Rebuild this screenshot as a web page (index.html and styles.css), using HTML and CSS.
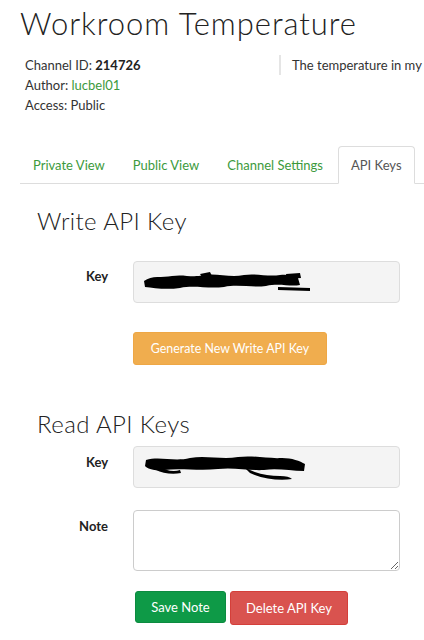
FILE: index.html
```html
<!DOCTYPE html>
<html>
<head>
<meta charset="utf-8">
<link rel="stylesheet" href="styles.css">
</head>
<body>
<div class="page">
  <h1 class="title">Workroom Temperature</h1>
  <div class="meta">
    <div class="meta-left">
      <div>Channel ID: <strong>214726</strong></div>
      <div>Author: <a class="link">lucbel01</a></div>
      <div>Access: Public</div>
    </div>
    <div class="meta-right">The temperature in my</div>
  </div>
  <ul class="tabs">
    <li class="tab">Private View</li>
    <li class="tab">Public View</li>
    <li class="tab">Channel Settings</li>
    <li class="tab active">API Keys</li>
  </ul>
  <div class="panel">
    <h2 class="section">Write API Key</h2>
    <div class="row row-write">
      <div class="label">Key</div>
      <div class="field key-field">
        <svg class="scribble" width="170" height="26" viewBox="0 0 170 26">
          <path d="M4 12 C12 6 22 9 32 7 C44 5 52 9 64 6 C78 4 90 9 104 6 C116 4 128 8 140 6 C148 5 154 7 158 9 L160 16 C150 18 140 14 126 17 C112 19 98 15 84 18 C68 20 54 16 40 19 C26 21 14 19 5 18 Z" fill="#000"/>
          <path d="M138 18 L170 19 L170 22 L138 21 Z" fill="#000"/>
          <path d="M146 5 L160 4 L161 9 L147 10 Z" fill="#000"/>
          <path d="M60 5 L70 3 L72 7 L62 8 Z" fill="#000"/>
        </svg>
      </div>
    </div>
    <div class="row">
      <div class="label"></div>
      <button class="btn btn-warning">Generate New Write API Key</button>
    </div>
    <h2 class="section section-read">Read API Keys</h2>
    <div class="row row-key2">
      <div class="label">Key</div>
      <div class="field key-field">
        <svg class="scribble" width="170" height="30" viewBox="0 0 170 30">
          <path d="M6 8 C20 4 34 10 50 6 C66 3 82 8 98 5 C114 3 128 7 142 6 C152 6 160 9 165 12 L164 19 C150 19 138 16 124 18 C110 19 94 15 78 17 C60 19 40 16 24 18 C14 19 8 17 5 14 Z" fill="#000"/>
          <path d="M104 15 C116 22 128 24 140 24 C146 24 150 25 152 27 C140 29 122 27 110 21 Z" fill="#000"/>
          <path d="M18 14 C26 19 34 20 40 18 L41 21 C32 23 22 21 16 18 Z" fill="#000"/>
        </svg>
      </div>
    </div>
    <div class="row row-note">
      <div class="label">Note</div>
      <textarea class="note"></textarea>
    </div>
    <div class="row row-actions">
      <div class="label"></div>
      <div class="actions">
        <button class="btn btn-success">Save Note</button>
        <button class="btn btn-danger">Delete API Key</button>
      </div>
    </div>
  </div>
</div>
</body>
</html>
```
FILE: styles.css
```css
* { box-sizing: border-box; }
html, body { margin: 0; padding: 0; background: #fff; }
body {
  font-family: Lato, "Open Sans", sans-serif;
  font-size: 13px;
  color: #333;
  width: 424px;
  height: 640px;
  overflow: hidden;
}
.page { padding-left: 20px; }
.title {
  font-family: Lato, sans-serif;
  font-weight: 300;
  font-size: 31px;
  line-height: 36px;
  color: #222;
  margin: 5px 0 0 0;
  letter-spacing: 0.95px;
  white-space: nowrap;
}
.meta {
  display: flex;
  margin-top: 14px;
  padding-left: 5px;
  line-height: 20px;
}
.meta-left { width: 254px; }
.meta-left strong { font-weight: 700; color: #222; }
.link { color: #3c9a3c; }
.meta-right {
  border-left: 2px solid #e5e5e5;
  padding-left: 11px;
  height: 20px;
  white-space: nowrap;
  overflow: hidden;
  flex: 1;
  color: #333;
}
.tabs {
  list-style: none;
  margin: 31px 0 0 0;
  padding: 0;
  display: flex;
  border-bottom: 1px solid #ddd;
  height: 38px;
}
.tab {
  padding: 0 12px;
  margin-right: 2px;
  line-height: 36px;
  height: 37px;
  font-size: 13px;
  color: #3c9a3c;
  border: 1px solid transparent;
  border-radius: 4px 4px 0 0;
  white-space: nowrap;
}
.tab.active {
  color: #555;
  border-color: #ddd;
  border-bottom-color: #fff;
  height: 38px;
  background: #fff;
}
.panel { padding-left: 17px; }
.section {
  font-family: Lato, sans-serif;
  font-weight: 300;
  font-size: 24px;
  line-height: 30px;
  color: #222;
  margin: 22px 0 0 0;
  letter-spacing: 0.4px;
}
.section-read { margin-top: 44px; }
.row { display: flex; align-items: flex-start; }
.row-write { margin-top: 25px; }
.label {
  width: 71px;
  text-align: right;
  font-weight: 700;
  color: #222;
  padding-top: 7px;
  margin-right: 25px;
}
.field {
  width: 267px;
  height: 42px;
  background: #f4f4f4;
  border: 1px solid #ddd;
  border-radius: 4px;
  display: flex;
  align-items: center;
  padding-left: 6px;
}
.btn {
  font-family: Lato, sans-serif;
  font-size: 13px;
  color: #fff;
  border: 1px solid transparent;
  border-radius: 3px;
  cursor: pointer;
  padding: 0;
}
.btn-warning {
  margin-top: 29px;
  width: 194px;
  height: 33px;
  background: #f0ad4e;
  border-color: #eea745;
  font-size: 12.4px;
}
.row-key2 { margin-top: 7px; }
.row-key2 .label { padding-top: 8px; }
.row-note { margin-top: 22px; }
.row-note .label { padding-top: 8px; }
.note {
  width: 267px;
  height: 61px;
  border: 1px solid #ccc;
  border-radius: 4px;
  resize: vertical;
  margin: 0;
}
.row-actions { margin-top: 20px; }
.actions { display: flex; gap: 4px; margin-left: 2px; }
.btn-success {
  width: 91px;
  height: 32px;
  background: #0e9a47;
  border-color: #0c8b40;
}
.btn-danger {
  width: 118px;
  height: 34px;
  background: #d9534f;
  border-color: #d43f3a;
}
```
